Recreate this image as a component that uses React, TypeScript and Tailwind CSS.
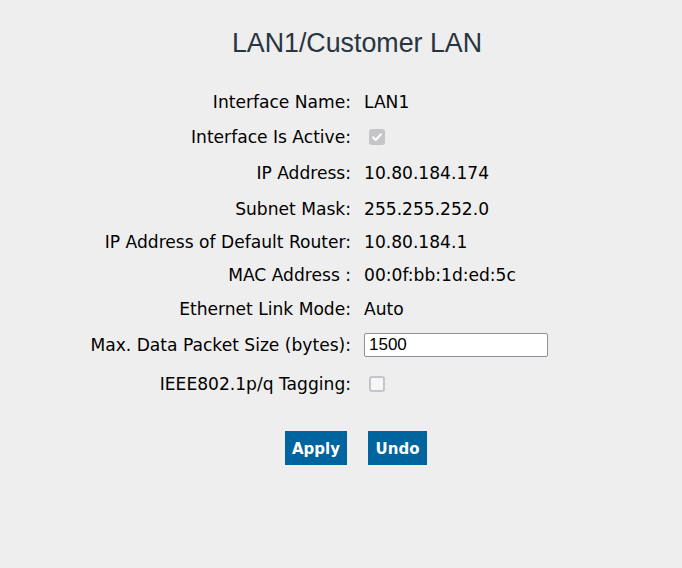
import React from "react";

function Check({ checked }: { checked: boolean }) {
  if (checked) {
    return (
      <span
        role="checkbox"
        aria-checked="true"
        aria-disabled="true"
        className="ml-[5px] w-[16px] h-[16px] rounded-[3px] bg-[#c5c5c9] flex items-center justify-center"
      >
        <svg width="12" height="12" viewBox="0 0 12 12" fill="none">
          <path d="M2 6.3 L4.8 9 L10 3.2" stroke="white" strokeWidth="2" strokeLinecap="round" strokeLinejoin="round" />
        </svg>
      </span>
    );
  }
  return (
    <span
      role="checkbox"
      aria-checked="false"
      aria-disabled="true"
      className="ml-[5px] w-[16px] h-[16px] rounded-[3px] border-2 border-[#c4c4cb] bg-[#f6f6f6] block"
    />
  );
}

export default function App() {
  const label = "text-right text-black whitespace-nowrap flex items-center justify-end";
  const font = { fontFamily: '"DejaVu Sans", Verdana, sans-serif' };
  return (
    <div className="min-h-screen w-full bg-[#eeeeee] text-black" style={font}>
      <div className="pt-[27px] pl-[32px] text-center">
        <h1
          className="text-[26.8px] leading-[32px] text-[#283440] font-normal"
          style={{ fontFamily: '"Liberation Sans", Arial, sans-serif' }}
        >
          LAN1/Customer LAN
        </h1>
      </div>
      <div className="mt-[25px] grid grid-cols-[351px_1fr] gap-x-[13px] text-[17.1px] leading-[20px]">
        <div className={`${label} h-[35px]`}>Interface Name:</div>
        <div className="h-[35px] flex items-center">LAN1</div>

        <div className={`${label} h-[35px]`}>Interface Is Active:</div>
        <div className="h-[35px] flex items-center">
          <Check checked />
        </div>

        <div className={`${label} h-[37px]`}>IP Address:</div>
        <div className="h-[37px] flex items-center">10.80.184.174</div>

        <div className={`${label} h-[35px]`}>Subnet Mask:</div>
        <div className="h-[35px] flex items-center">255.255.252.0</div>

        <div className={`${label} h-[32px]`}>IP Address of Default Router:</div>
        <div className="h-[32px] flex items-center">10.80.184.1</div>

        <div className={`${label} h-[34px]`}>MAC Address :</div>
        <div className="h-[34px] flex items-center">00:0f:bb:1d:ed:5c</div>

        <div className={`${label} h-[34px]`}>Ethernet Link Mode:</div>
        <div className="h-[34px] flex items-center">Auto</div>

        <div className={`${label} h-[38px]`}>Max. Data Packet Size (bytes):</div>
        <div className="h-[38px] flex items-center">
          <input
            type="text"
            defaultValue="1500"
            className="w-[184px] h-[24px] bg-white border border-[#8f8f9d] rounded-[2px] px-[4px] text-[17px] text-black outline-none"
            style={{ fontFamily: '"Liberation Sans", Arial, sans-serif' }}
          />
        </div>

        <div className={`${label} h-[39px]`}>IEEE802.1p/q Tagging:</div>
        <div className="h-[39px] flex items-center">
          <Check checked={false} />
        </div>
      </div>
      <div className="mt-[28px] pl-[30px] flex justify-center gap-[21px]">
        <button className="w-[62px] h-[34px] pt-[3px] bg-[#00649e] text-white font-bold text-[15px] flex items-center justify-center">
          Apply
        </button>
        <button className="w-[59px] h-[34px] pt-[3px] bg-[#00649e] text-white font-bold text-[15px] flex items-center justify-center">
          Undo
        </button>
      </div>
    </div>
  );
}
